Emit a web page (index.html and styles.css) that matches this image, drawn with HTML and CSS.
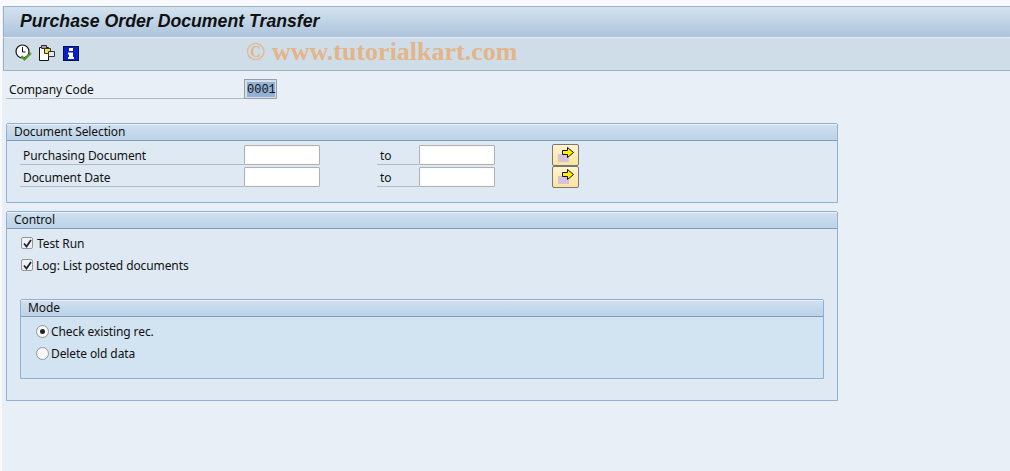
FILE: index.html
```html
<!DOCTYPE html>
<html>
<head>
    <title>Purchase Order Document Transfer</title>
    <link rel="stylesheet" href="styles.css">
</head>
<body>
    <div class="top-strip"></div>
    <div class="window">
        <header class="title-bar">
            <h1>Purchase Order Document Transfer</h1>
        </header>
        <div class="toolbar">
            <svg class="tool" width="18" height="18" viewBox="0 0 18 18">
                <circle cx="7.5" cy="7.5" r="6.5" fill="#fff" stroke="#111" stroke-width="1.2"/>
                <path d="M7.5 3V8H10.5" fill="none" stroke="#111" stroke-width="1"/>
                <path d="M6.5 12L9.5 15.5L16 9" fill="none" stroke="#4f9a2c" stroke-width="2.2"/>
            </svg>
            <svg class="tool" width="18" height="18" viewBox="0 0 18 18">
                <path d="M0.5 3.5H9.5V16.5H0.5Z" fill="#fff" stroke="#111"/>
                <path d="M2.5 1.5H7.5V4.5H2.5Z" fill="#a99ab8" stroke="#333"/>
                <path d="M5.5 4.5H11.5V9.5H5.5Z" fill="#f5e63c" stroke="#333"/>
                <path d="M9.5 7.5H15.5V12.5H9.5Z" fill="#e8e8e8" stroke="#333"/>
            </svg>
            <svg class="tool" width="16" height="15" viewBox="0 0 16 15">
                <rect x="0.5" y="0.5" width="15" height="14" fill="#0a1fc4" stroke="#06124f"/>
                <path d="M6 2H10V5H6ZM5 6.5H10V11H11V13H5V11H6V8.5H5Z" fill="#fff"/>
            </svg>
            <span class="watermark">© www.tutorialkart.com</span>
        </div>
        <main class="content">
            <div class="company-row">
                <label class="label company-label">Company Code</label>
                <span class="company-field"><span class="selected">0001</span></span>
            </div>

            <section class="group selection-group">
                <div class="group-head">Document Selection</div>
                <div class="group-body selection-body">
                    <div class="range-row">
                        <label class="label range-label">Purchasing Document</label>
                        <input class="field" type="text">
                        <label class="label to-label">to</label>
                        <input class="field" type="text">
                        <button class="more-btn" type="button">
                            <svg width="18" height="16" viewBox="0 0 18 16">
                                <rect x="0" y="7" width="11" height="8" fill="#d5c3de"/>
                                <path d="M4.5 3.5H9.5V0.5L15.5 5.5L9.5 10.5V7.5H4.5Z" fill="#ffef00" stroke="#111"/>
                            </svg>
                        </button>
                    </div>
                    <div class="range-row">
                        <label class="label range-label">Document Date</label>
                        <input class="field" type="text">
                        <label class="label to-label">to</label>
                        <input class="field" type="text">
                        <button class="more-btn" type="button">
                            <svg width="18" height="16" viewBox="0 0 18 16">
                                <rect x="0" y="7" width="11" height="8" fill="#d5c3de"/>
                                <path d="M4.5 3.5H9.5V0.5L15.5 5.5L9.5 10.5V7.5H4.5Z" fill="#ffef00" stroke="#111"/>
                            </svg>
                        </button>
                    </div>
                </div>
            </section>

            <section class="group control-group">
                <div class="group-head">Control</div>
                <div class="group-body control-body">
                    <div class="check-row">
                        <span class="check">
                            <svg width="9" height="9" viewBox="0 0 9 9"><path d="M1 4.5L3.5 7.5L8 1" fill="none" stroke="#223" stroke-width="1.8"/></svg>
                        </span>
                        <span class="text">Test Run</span>
                    </div>
                    <div class="check-row">
                        <span class="check">
                            <svg width="9" height="9" viewBox="0 0 9 9"><path d="M1 4.5L3.5 7.5L8 1" fill="none" stroke="#223" stroke-width="1.8"/></svg>
                        </span>
                        <span class="text log-text">Log: List posted documents</span>
                    </div>

                    <section class="group mode-group">
                        <div class="group-head">Mode</div>
                        <div class="group-body mode-body">
                            <div class="radio-row">
                                <span class="radio radio-on"></span>
                                <span class="text">Check existing rec.</span>
                            </div>
                            <div class="radio-row">
                                <span class="radio"></span>
                                <span class="text">Delete old data</span>
                            </div>
                        </div>
                    </section>
                </div>
            </section>
        </main>
    </div>
</body>
</html>
```

FILE: styles.css
```css
html, body {
    height: 100%;
}
body {
    margin: 0;
    background-color: #f8f9fc;
    font-family: "Noto Sans", "Open Sans", sans-serif;
    font-size: 12px;
    letter-spacing: -0.1px;
    color: #111;
    overflow: hidden;
}
.top-strip {
    height: 6px;
}
.window {
    margin-left: 2px;
    height: 465px;
    background-color: #e8eff7;
}
.title-bar {
    box-sizing: border-box;
    height: 31px;
    margin-left: 1px;
    padding: 3px 0 0 16px;
    border-top: 1px solid #9fb0c6;
    border-left: 1px solid #9fb0c6;
    background: linear-gradient(#d3e2ef, #adc4dc);
}
h1 {
    margin: 0;
    font-family: "Liberation Sans", Arial, sans-serif;
    font-size: 17.7px;
    font-weight: bold;
    font-style: italic;
    letter-spacing: 0;
    line-height: 22px;
    color: #111;
}
.toolbar {
    box-sizing: border-box;
    height: 34px;
    margin-left: 1px;
    padding: 0 0 2px 11px;
    display: flex;
    align-items: center;
    gap: 6px;
    background-color: #cfdde8;
    border-top: 1px solid #e6eef5;
    border-left: 1px solid #9fb0c6;
    border-bottom: 1px solid #9fb0c6;
}
.tool {
    display: block;
}
.watermark {
    margin: 0 0 2px 161px;
    font-family: "Liberation Serif", serif;
    font-size: 26px;
    font-weight: bold;
    letter-spacing: 0;
    color: #e3b588;
    white-space: nowrap;
}
.content {
    padding: 8px 0 0 4px;
}
.label {
    box-sizing: border-box;
    display: block;
    height: 20px;
    line-height: 21px;
    border-bottom: 1px solid #b3b9bf;
}
.company-row {
    display: flex;
    height: 20px;
    margin-bottom: 24px;
}
.company-label {
    width: 238px;
    padding-left: 3px;
    line-height: 22px;
}
.company-field {
    box-sizing: border-box;
    width: 33px;
    height: 20px;
    padding: 2px 1px 1px 2px;
    background-color: #d5dfe9;
    border: 1px solid #9a9fa5;
    font-family: "Liberation Mono", monospace;
    font-size: 12px;
    letter-spacing: 0;
}
.selected {
    display: block;
    height: 15px;
    line-height: 16px;
    background-color: #93b1d6;
    text-align: center;
}
.group {
    width: 832px;
    box-sizing: border-box;
    border: 1px solid #91afcf;
    border-radius: 2px 2px 0 0;
    background-color: #dee9f3;
}
.group-head {
    box-sizing: border-box;
    height: 17px;
    padding-left: 7px;
    line-height: 13px;
    background: linear-gradient(#cfe0ef, #bcd2e7);
    border-top: 1px solid #e9f1f8;
    border-bottom: 1px solid #7f9cba;
}
.group-body {
    box-sizing: border-box;
}
.selection-group {
    height: 80px;
}
.selection-body {
    padding: 4px 0 0 13px;
}
.range-row {
    display: flex;
    height: 22px;
}
.range-label {
    width: 224px;
    padding-left: 3px;
}
.to-label {
    width: 42px;
    margin-left: 57px;
    padding-left: 3px;
}
.field {
    box-sizing: border-box;
    width: 76px;
    height: 20px;
    margin: 0;
    padding: 0;
    background-color: #fff;
    border: 1px solid #b0b0b0;
    border-radius: 1px;
    box-shadow: inset 0 0 1px #ddd;
}
.more-btn {
    box-sizing: border-box;
    width: 27px;
    height: 22px;
    margin: -1px 0 0 57px;
    padding: 0 0 0 2px;
    display: flex;
    align-items: center;
    justify-content: center;
    background: linear-gradient(#fff4cf, #fde49a);
    border: 1px solid #777;
    border-radius: 2px;
}
.control-group {
    height: 190px;
    margin-top: 8px;
}
.control-body {
    padding: 3px 0 0 13px;
}
.check-row {
    display: flex;
    align-items: center;
    height: 22px;
    margin-left: 1px;
}
.check {
    box-sizing: border-box;
    width: 12px;
    height: 12px;
    display: flex;
    align-items: center;
    justify-content: center;
    background-color: #eef2f6;
    border: 1px solid #969696;
    border-radius: 2px;
}
.text {
    margin-left: 4px;
    padding-top: 1px;
    line-height: 18px;
}
.log-text {
    margin-left: 3px;
}
.mode-group {
    width: 804px;
    height: 80px;
    margin-top: 23px;
    background-color: #d2e3f2;
}
.mode-body {
    padding: 3px 0 0 15px;
}
.radio-row {
    display: flex;
    align-items: center;
    height: 22px;
}
.radio {
    box-sizing: border-box;
    width: 13px;
    height: 13px;
    display: flex;
    align-items: center;
    justify-content: center;
    background-color: #f8f8f8;
    border: 1px solid #969696;
    border-radius: 50%;
}
.radio-on::after {
    content: "";
    width: 5px;
    height: 5px;
    border-radius: 50%;
    background-color: #222;
}
.radio-row .text {
    margin-left: 2px;
}
```
